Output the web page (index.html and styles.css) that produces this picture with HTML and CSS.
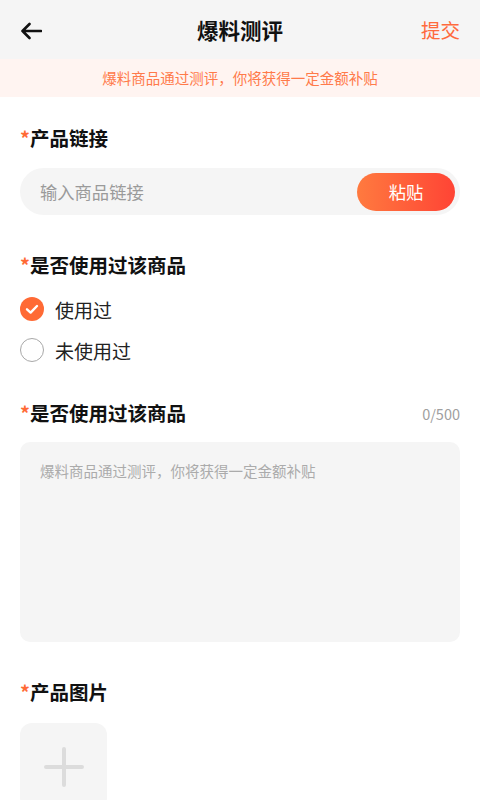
FILE: index.html
```html
<!DOCTYPE html>
<html lang="zh-CN">
<head>
    <title>爆料测评</title>
    <meta charset="utf-8">
    <meta name="viewport" content="width=device-width, initial-scale=1.0">
    <link rel="stylesheet" href="styles.css">
</head>
<body>
    <!-- Top bar -->
    <header class="topbar">
        <div class="back">
            <svg width="22" height="18" viewBox="0 0 22 18">
                <path d="M2.5 9H21M9.5 2L2.5 9L9.5 16" fill="none" stroke="#111" stroke-width="2.6" stroke-linecap="round" stroke-linejoin="round"/>
            </svg>
        </div>
        <h1 class="title">爆料测评</h1>
        <div class="submit">提交</div>
    </header>

    <div class="notice">爆料商品通过测评，你将获得一定金额补贴</div>

    <main class="form">
        <div class="label label-first"><span class="star">*</span>产品链接</div>
        <div class="link-box">
            <span class="placeholder">输入商品链接</span>
            <button class="paste">粘贴</button>
        </div>

        <div class="label label-gap"><span class="star">*</span>是否使用过该商品</div>
        <div class="options">
            <div class="option">
                <span class="radio checked">
                    <svg width="24" height="24" viewBox="0 0 24 24">
                        <circle cx="12" cy="12" r="12" fill="#ff6a35"/>
                        <path d="M7 12.3L10.6 15.6L17 9" fill="none" stroke="#fff" stroke-width="2.4" stroke-linecap="round" stroke-linejoin="round"/>
                    </svg>
                </span>
                <span>使用过</span>
            </div>
            <div class="option">
                <span class="radio"></span>
                <span>未使用过</span>
            </div>
        </div>

        <div class="label-row label-gap2">
            <div class="label"><span class="star">*</span>是否使用过该商品</div>
            <span class="count">0/500</span>
        </div>
        <div class="text-box">爆料商品通过测评，你将获得一定金额补贴</div>

        <div class="label label-gap"><span class="star">*</span>产品图片</div>
        <div class="upload">
            <svg width="40" height="40" viewBox="0 0 40 40">
                <path d="M20 2V38M2 20H38" stroke="#dcdcdc" stroke-width="4" stroke-linecap="round"/>
            </svg>
        </div>
    </main>
</body>
</html>
```

FILE: styles.css
```css
/* General styles */
body {
    margin: 0;
    padding: 0;
    font-family: "Noto Sans CJK SC", "Noto Sans", sans-serif;
    background: #ffffff;
    color: #111;
}

/* Top bar */
.topbar {
    height: 59px;
    display: grid;
    grid-template-columns: 1fr auto 1fr;
    align-items: center;
    padding: 0 20px;
    background: #f5f5f5;
}

.back {
    display: flex;
    align-items: center;
    padding-top: 2px;
}

.title {
    margin: 0;
    font-size: 21.5px;
    font-weight: 700;
    line-height: 30px;
}

.submit {
    justify-self: end;
    font-size: 19.5px;
    color: #ff6a3d;
}

.notice {
    height: 38px;
    line-height: 38px;
    text-align: center;
    font-size: 14.5px;
    color: #ff7a4a;
    background: #fff4f1;
}

/* Form */
.form {
    padding: 0 20px;
}

.label {
    font-size: 19.5px;
    font-weight: 700;
    line-height: 28px;
}

.star {
    color: #ff6a35;
    font-weight: 700;
}

.label-first {
    margin-top: 27px;
}

.label-gap {
    margin-top: 36px;
}

.link-box {
    margin-top: 16px;
    height: 47px;
    display: flex;
    align-items: center;
    justify-content: space-between;
    padding: 0 5px 0 20px;
    border-radius: 24px;
    background: #f5f5f5;
}

.placeholder {
    font-size: 17.3px;
    color: #9a9a9a;
}

.paste {
    width: 98px;
    height: 38px;
    border: none;
    border-radius: 19px;
    background: linear-gradient(to right, #ff7a3f, #ff4435);
    color: #fff;
    font-family: inherit;
    font-size: 17.3px;
    padding: 0;
}

/* Radio options */
.options {
    margin-top: 14px;
    display: flex;
    flex-direction: column;
    gap: 9px;
}

.option {
    height: 32px;
    display: flex;
    align-items: center;
    gap: 11px;
    font-size: 19px;
    color: #222;
}

.radio {
    width: 24px;
    height: 24px;
    box-sizing: border-box;
    border: 1.5px solid #a8a8a8;
    border-radius: 50%;
    display: flex;
}

.radio.checked {
    border: none;
}

/* Description */
.label-row {
    display: flex;
    align-items: center;
    justify-content: space-between;
}

.label-gap2 {
    margin-top: 33px;
}

.count {
    font-size: 14.5px;
    color: #a0a0a0;
}

.text-box {
    margin-top: 15px;
    height: 200px;
    box-sizing: border-box;
    padding: 18px 20px;
    border-radius: 10px;
    background: #f5f5f5;
    font-size: 14.5px;
    color: #ababab;
}

/* Upload */
.upload {
    margin-top: 17px;
    width: 87px;
    height: 87px;
    border-radius: 12px;
    background: #f5f5f5;
    display: flex;
    align-items: center;
    justify-content: center;
}
```
